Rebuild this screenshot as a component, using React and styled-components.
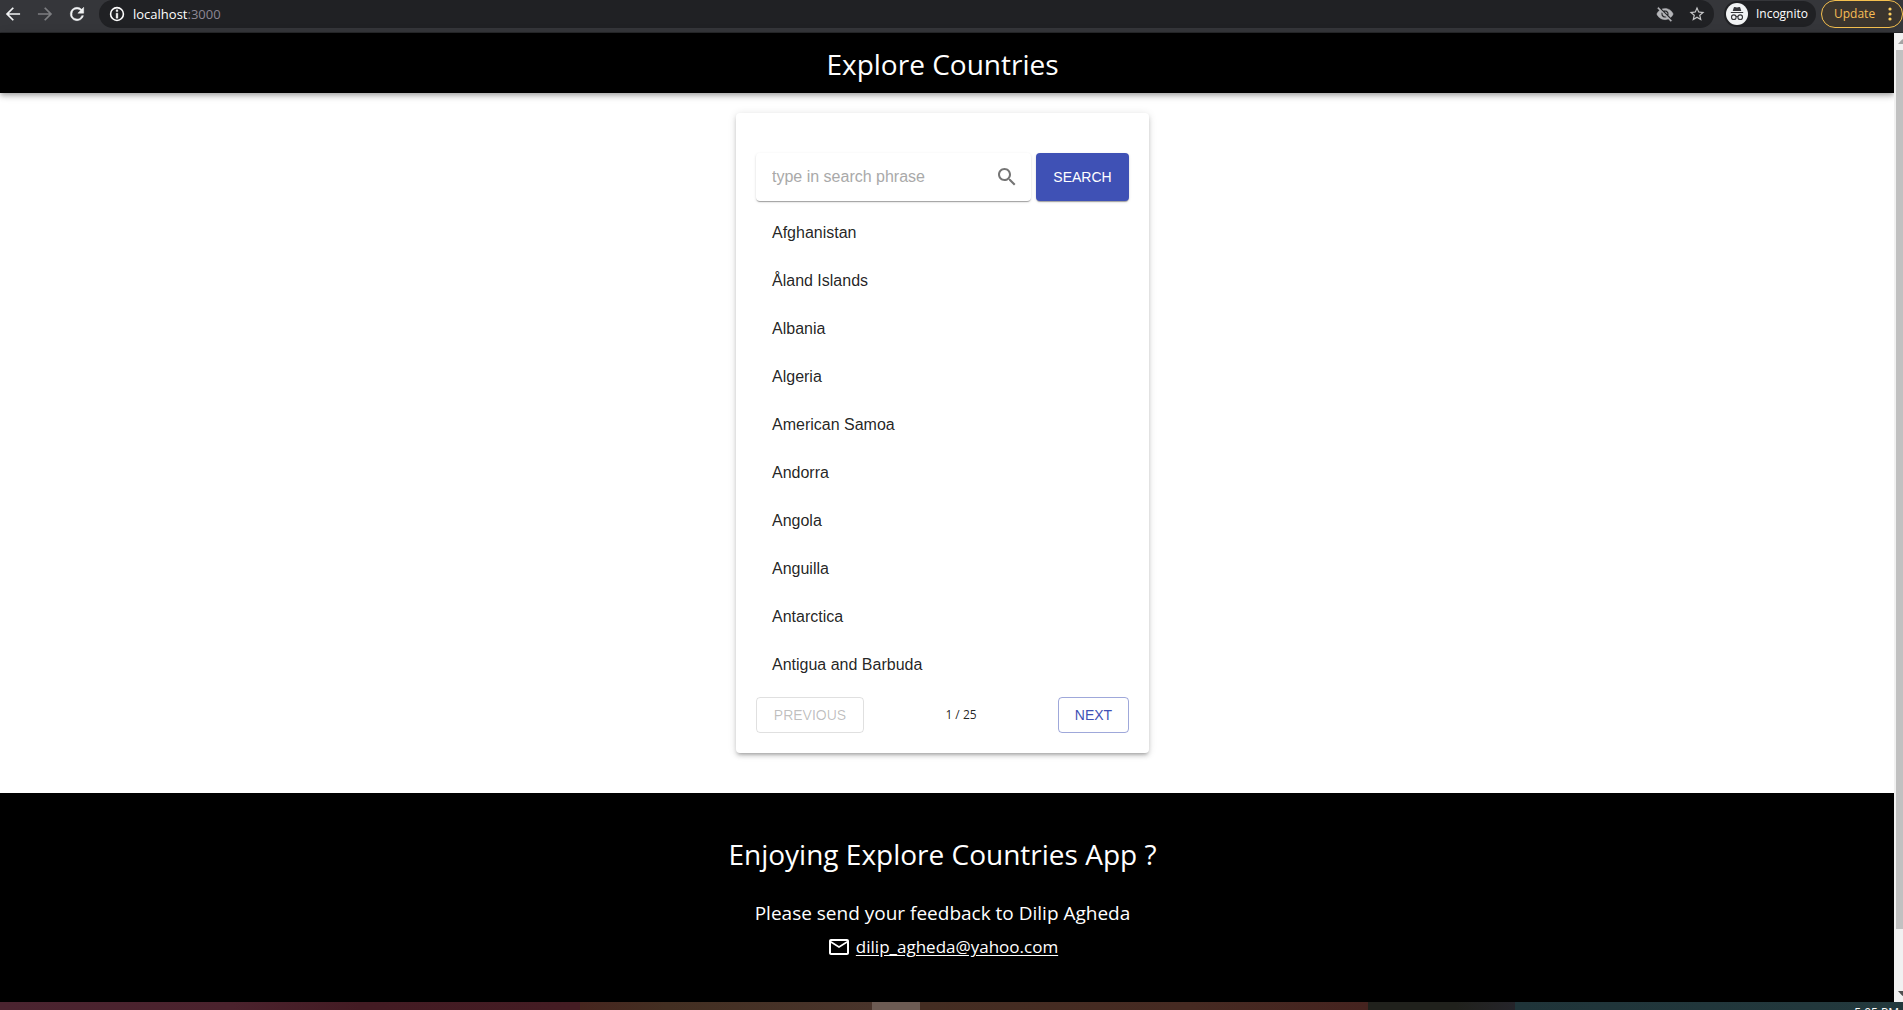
import React, { useState } from "react";
import styled, { createGlobalStyle, css } from "styled-components";

const GlobalStyle = createGlobalStyle`
  *, *::before, *::after { box-sizing: border-box; }
  body { margin: 0; background: #fff; overflow: hidden; }
  button, input { font: inherit; }
`;

const humanist = `"Segoe UI", "Open Sans", "Noto Sans", sans-serif`;
const grotesque = `"Liberation Sans", Arial, sans-serif`;

const Screen = styled.div`
  display: flex;
  flex-direction: column;
  height: 100vh;
  font-family: ${humanist};
`;

/* Browser toolbar */
const Toolbar = styled.div`
  display: flex;
  align-items: flex-start;
  flex: none;
  height: 33px;
  background: #35363a;
  border-bottom: 1px solid #28292c;
  font-size: 12px;
  color: #fff;
`;

const NavButtons = styled.nav`
  display: flex;
  gap: 12px;
  padding: 4px 12px 0 3px;
`;

const IconButton = styled.button`
  display: flex;
  align-items: center;
  justify-content: center;
  width: 20px;
  height: 20px;
  padding: 0;
  border: 0;
  background: none;
  color: ${(p) => p.$color || "#f1f3f4"};
`;

const AddressBar = styled.div`
  display: flex;
  align-items: center;
  flex: 1;
  gap: 6px;
  height: 28px;
  padding: 0 7px 0 8px;
  border-radius: 14px;
  background: #202124;
`;

const Address = styled.div`
  flex: 1;
  font-size: 13px;
  line-height: 20px;
  color: #fff;
  span { color: #8c8694; }
`;

const AddressActions = styled.div`
  display: flex;
  gap: 12px;
`;

const Profile = styled.button`
  display: flex;
  align-items: center;
  gap: 8px;
  height: 26px;
  margin: 1px 5px 0 10px;
  padding: 0 8px 0 2px;
  border: 0;
  border-radius: 13px;
  background: #202124;
  color: #fff;
  line-height: 16px;
`;

const UpdateButton = styled.button`
  display: flex;
  align-items: center;
  justify-content: space-between;
  width: 82px;
  height: 28px;
  padding: 0 10px 0 12px;
  border: 1px solid #f5c04f;
  border-radius: 14px;
  background: #3b352e;
  color: #f7bd55;
  line-height: 16px;
`;

/* Page viewport */
const Viewport = styled.div`
  display: flex;
  flex: 1;
  min-height: 0;
`;

const Page = styled.div`
  display: flex;
  flex-direction: column;
  flex: 1;
  min-width: 0;
`;

const Header = styled.header`
  display: flex;
  align-items: center;
  justify-content: center;
  flex: none;
  height: 60px;
  padding: 2px 9px 0 0;
  background: #000;
  color: #fff;
  box-shadow: 0 2px 4px -1px rgba(0, 0, 0, 0.2), 0 4px 5px rgba(0, 0, 0, 0.14),
    0 1px 10px rgba(0, 0, 0, 0.12);
`;

const Title = styled.h1`
  margin: 0;
  font-size: 28px;
  font-weight: 400;
  line-height: 42px;
`;

const Main = styled.main`
  display: flex;
  justify-content: center;
  padding: 20px 9px 40px 0;
`;

const Card = styled.section`
  width: 413px;
  padding: 40px 20px 20px;
  border-radius: 4px;
  background: #fff;
  box-shadow: 0 3px 3px -2px rgba(0, 0, 0, 0.2), 0 3px 4px rgba(0, 0, 0, 0.14),
    0 1px 8px rgba(0, 0, 0, 0.12);
`;

const SearchForm = styled.form`
  display: flex;
  gap: 5px;
`;

const raised = css`
  border-radius: 4px;
  box-shadow: 0 2px 1px -1px rgba(0, 0, 0, 0.2), 0 1px 1px rgba(0, 0, 0, 0.14),
    0 1px 3px rgba(0, 0, 0, 0.12);
`;

const SearchField = styled.label`
  ${raised}
  display: flex;
  align-items: center;
  flex: 1;
  min-width: 0;
  height: 48px;
  padding: 0 12px 0 16px;
  color: #757575;
`;

const SearchInput = styled.input`
  flex: 1;
  min-width: 0;
  padding: 0;
  border: 0;
  outline: 0;
  background: none;
  font-family: ${grotesque};
  font-size: 16px;
  line-height: 20px;
  color: rgba(0, 0, 0, 0.87);
  &::placeholder { color: #a9a9a9; opacity: 1; }
`;

const Button = styled.button`
  min-width: ${(p) => p.$width}px;
  height: 36px;
  padding: 0 12px;
  border: 1px solid rgba(63, 81, 181, 0.5);
  border-radius: 4px;
  background: none;
  color: #3f51b5;
  font-family: ${grotesque};
  font-size: 14px;
  line-height: 24px;
  text-transform: uppercase;
  &:disabled {
    border-color: rgba(0, 0, 0, 0.12);
    color: rgba(0, 0, 0, 0.26);
  }
`;

const SearchButton = styled(Button)`
  ${raised}
  height: 48px;
  border: 0;
  background: #3f51b5;
  color: #fff;
`;

const CountryList = styled.ul`
  margin: 0;
  padding: 8px 0;
  list-style: none;
`;

const Country = styled.li`
  padding: 12px 16px;
  font-family: ${grotesque};
  font-size: 16px;
  line-height: 24px;
  color: rgba(0, 0, 0, 0.87);
`;

const Pager = styled.div`
  display: flex;
  align-items: center;
  justify-content: space-between;
`;

const PageCount = styled.span`
  font-size: 12px;
  line-height: 16px;
  color: rgba(0, 0, 0, 0.87);
`;

const Footer = styled.footer`
  display: flex;
  flex-direction: column;
  align-items: center;
  flex: 1;
  padding: 40px 9px 40px 0;
  background: #000;
  color: #fff;
`;

const FooterTitle = styled.h2`
  margin: 0;
  font-size: 28px;
  font-weight: 400;
  line-height: 42px;
`;

const Feedback = styled.p`
  margin: 24px 0 8px;
  font-size: 19px;
  line-height: 28px;
`;

const MailLine = styled.div`
  display: flex;
  align-items: center;
  gap: 5px;
  font-size: 17px;
  line-height: 24px;
  a {
    color: #fff;
    text-underline-offset: 2px;
  }
`;

/* Scrollbar along the right edge of the window */
const Scrollbar = styled.div`
  display: flex;
  flex-direction: column;
  flex: none;
  width: 9px;
  overflow: hidden;
  background: #f1f1f1;
`;

const ScrollArrow = styled.svg`
  display: block;
  flex: none;
  width: 17px;
  height: 17px;
`;

const ScrollThumb = styled.div`
  flex: 94;
  margin-left: 2px;
  background: #c1c1c1;
`;

const ScrollRest = styled.div`
  flex: 6;
`;

/* Strip of the desktop taskbar below the window */
const Taskbar = styled.div`
  display: flex;
  flex: none;
  height: 8px;
  overflow: hidden;
`;

const Strip = styled.div`
  flex: ${(p) => p.$grow};
  background: ${(p) => p.$fill};
`;

const Clock = styled.time`
  display: block;
  padding: 3px 4px 0 0;
  font-size: 12px;
  line-height: 16px;
  text-align: right;
  color: #fff;
`;

const Svg = ({ size = 20, children }) => (
  <svg width={size} height={size} viewBox="0 0 24 24" fill="currentColor" aria-hidden="true">
    {children}
  </svg>
);

const names = [
  "Afghanistan",
  "Åland Islands",
  "Albania",
  "Algeria",
  "American Samoa",
  "Andorra",
  "Angola",
  "Anguilla",
  "Antarctica",
  "Antigua and Barbuda",
];

const strips = [
  [580, "linear-gradient(90deg, #4b2430, #4b222d 40%, #431b23 62%, #441c23)"],
  [292, "linear-gradient(90deg, #47261f, #432f22 30%, #49342b)"],
  [48, "#6c5b53"],
  [448, "linear-gradient(90deg, #442d22, #462a22 60%, #45231f)"],
  [147, "linear-gradient(90deg, #20211c 60%, #25242a)"],
];

function BrowserToolbar() {
  return (
    <Toolbar>
      <NavButtons>
        <IconButton aria-label="Back">
          <Svg><path d="M20.5 11H7.2l5.9-5.8L11.6 3.8 3.4 12l8.2 8.2 1.5-1.4L7.2 13h13.3z" /></Svg>
        </IconButton>
        <IconButton aria-label="Forward" $color="#7d7e81">
          <Svg><path d="M3.5 11h13.3l-5.9-5.8 1.5-1.4 8.2 8.2-8.2 8.2-1.5-1.4 5.9-5.8H3.5z" /></Svg>
        </IconButton>
        <IconButton aria-label="Reload">
          <Svg>
            <path d="M17.65 6.35A7.95 7.95 0 0 0 12 4a8 8 0 1 0 7.73 10h-2.08A6 6 0 1 1 12 6c1.66 0 3.14.69 4.22 1.78L13 11h7V4z" stroke="currentColor" strokeWidth="0.6" />
          </Svg>
        </IconButton>
      </NavButtons>
      <AddressBar>
        <Svg>
          <path d="M11 7h2v2h-2zm0 4h2v6h-2z" stroke="currentColor" strokeWidth="0.5" />
          <circle cx="12" cy="12" r="7.7" fill="none" stroke="currentColor" strokeWidth="1.9" />
        </Svg>
        <Address>localhost<span>:3000</span></Address>
        <AddressActions>
          <IconButton aria-label="Third-party cookies blocked" $color="#b4b5b8">
            <Svg size={18}>
              <path d="M12 7c2.76 0 5 2.24 5 5 0 .65-.13 1.26-.36 1.83l2.92 2.92c1.51-1.26 2.7-2.89 3.43-4.75-1.73-4.39-6-7.5-11-7.5-1.4 0-2.74.25-3.98.7l2.16 2.16C10.74 7.13 11.35 7 12 7zM2 4.27l2.28 2.28.46.46C3.08 8.3 1.78 10.02 1 12c1.73 4.39 6 7.5 11 7.5 1.55 0 3.03-.3 4.38-.84l.42.42L19.73 22 21 20.73 3.27 3 2 4.27zM7.53 9.8l1.55 1.55c-.05.21-.08.43-.08.65 0 1.66 1.34 3 3 3 .22 0 .44-.03.65-.08l1.55 1.55c-.67.33-1.41.53-2.2.53-2.76 0-5-2.24-5-5 0-.79.2-1.53.53-2.2zm4.31-.78l3.15 3.15.02-.16c0-1.66-1.34-3-3-3l-.17.01z" stroke="currentColor" strokeWidth="0.5" />
            </Svg>
          </IconButton>
          <IconButton aria-label="Bookmark this tab" $color="#c6c7c9">
            <Svg size={18}>
              <path d="M22 9.24l-7.19-.62L12 2 9.19 8.63 2 9.24l5.46 4.73L5.82 21 12 17.27 18.18 21l-1.63-7.03L22 9.24zM12 15.4l-3.76 2.27 1-4.28-3.32-2.88 4.38-.38L12 6.1l1.71 4.04 4.38.38-3.32 2.88 1 4.28L12 15.4z" />
            </Svg>
          </IconButton>
        </AddressActions>
      </AddressBar>
      <Profile>
        <svg width="22" height="22" viewBox="0 0 22 22" aria-hidden="true">
          <circle cx="11" cy="11" r="11" fill="#f1f3f4" />
          <path d="M7.8 4.5q.2-.6.9-.4l2.3.5 2.3-.5q.7-.2.9.4L15.3 8H6.7zM4.8 9h12.4v1H4.8z" fill="#35363a" />
          <g fill="none" stroke="#35363a" strokeWidth="1.1">
            <circle cx="7.8" cy="14.2" r="2.3" />
            <circle cx="14.2" cy="14.2" r="2.3" />
            <path d="M10 13.8q1-.7 2 0" />
          </g>
        </svg>
        Incognito
      </Profile>
      <UpdateButton>
        Update
        <svg width="4" height="14" viewBox="0 0 4 14" fill="#fdcf60" aria-hidden="true">
          <circle cx="2" cy="2" r="1.6" />
          <circle cx="2" cy="7" r="1.6" />
          <circle cx="2" cy="12" r="1.6" />
        </svg>
      </UpdateButton>
    </Toolbar>
  );
}

export default function App() {
  const [phrase, setPhrase] = useState("");
  return (
    <Screen>
      <GlobalStyle />
      <BrowserToolbar />
      <Viewport>
        <Page>
          <Header>
            <Title>Explore Countries</Title>
          </Header>
          <Main>
            <Card>
              <SearchForm onSubmit={(e) => e.preventDefault()}>
                <SearchField>
                  <SearchInput
                    aria-label="Search phrase"
                    placeholder="type in search phrase"
                    value={phrase}
                    onChange={(e) => setPhrase(e.target.value)}
                  />
                  <Svg size={24}>
                    <path d="M15.5 14h-.79l-.28-.27C15.41 12.59 16 11.11 16 9.5 16 5.91 13.09 3 9.5 3S3 5.91 3 9.5 5.91 16 9.5 16c1.61 0 3.09-.59 4.23-1.57l.27.28v.79l5 4.99L20.49 19l-4.99-5zm-6 0C7.01 14 5 11.99 5 9.5S7.01 5 9.5 5 14 7.01 14 9.5 11.99 14 9.5 14z" />
                  </Svg>
                </SearchField>
                <SearchButton type="submit" $width={93}>Search</SearchButton>
              </SearchForm>
              <CountryList>
                {names.map((name) => (
                  <Country key={name}>{name}</Country>
                ))}
              </CountryList>
              <Pager>
                <Button type="button" disabled $width={108}>Previous</Button>
                <PageCount>1 / 25</PageCount>
                <Button type="button" $width={71}>Next</Button>
              </Pager>
            </Card>
          </Main>
          <Footer>
            <FooterTitle>Enjoying Explore Countries App ?</FooterTitle>
            <Feedback>Please send your feedback to Dilip Agheda</Feedback>
            <MailLine>
              <Svg size={24}>
                <path d="M22 6c0-1.1-.9-2-2-2H4c-1.1 0-2 .9-2 2v12c0 1.1.9 2 2 2h16c1.1 0 2-.9 2-2V6zm-2 0l-8 4.99L4 6h16zm0 12H4V8l8 5 8-5v10z" />
              </Svg>
              <a href="mailto:dilip_agheda@yahoo.com">dilip_agheda@yahoo.com</a>
            </MailLine>
          </Footer>
        </Page>
        <Scrollbar>
          <ScrollArrow viewBox="0 0 17 17"><path d="M4 11l4.5-5 4.5 5z" fill="#a3a3a3" /></ScrollArrow>
          <ScrollThumb />
          <ScrollRest />
          <ScrollArrow viewBox="0 0 17 17"><path d="M4 6l4.5 5L13 6z" fill="#505050" /></ScrollArrow>
        </Scrollbar>
      </Viewport>
      <Taskbar>
        {strips.map(([grow, fill]) => (
          <Strip key={grow} $grow={grow} $fill={fill} />
        ))}
        <Strip $grow={388} $fill="linear-gradient(90deg, #1f3439, #23393d)">
          <Clock>5:05 PM</Clock>
        </Strip>
      </Taskbar>
    </Screen>
  );
}
